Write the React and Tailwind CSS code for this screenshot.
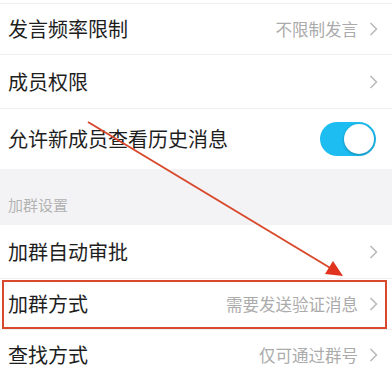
import React from "react";

const font = { fontFamily: '"Noto Sans CJK SC", "Noto Sans", sans-serif' };

function Chevron() {
  return (
    <svg width="9" height="14" viewBox="0 0 9 14" className="ml-[11px] shrink-0">
      <path d="M1.5 1 L7.5 7 L1.5 13" fill="none" stroke="#b8b8b8" strokeWidth="1.5" />
    </svg>
  );
}

function Row({ label, value, h, chevron = true }) {
  return (
    <div className={`flex items-center justify-between pl-[8px] pr-[14px] border-b border-[#eeeeee] bg-white ${h}`}>
      <span className="text-[20px] text-[#1e1e1e] leading-none">{label}</span>
      <div className="flex items-center">
        {value && <span className="text-[16.5px] text-[#ababab] leading-none">{value}</span>}
        {chevron && <Chevron />}
      </div>
    </div>
  );
}

export default function App() {
  return (
    <div className="relative w-[392px] h-[374px] overflow-hidden bg-white" style={font}>
      <div className="h-[4px] border-b border-[#eeeeee]" />
      <Row label="发言频率限制" value="不限制发言" h="h-[51px]" />
      <Row label="成员权限" h="h-[54px]" />
      <div className="flex items-center justify-between pl-[8px] pr-[16px] h-[60px] bg-white">
        <span className="text-[20px] text-[#1e1e1e] leading-none">允许新成员查看历史消息</span>
        <div className="w-[56px] h-[34px] rounded-full bg-[#1dbdf1] flex items-center justify-end pr-[2px]">
          <div className="w-[30px] h-[30px] rounded-full bg-white shadow-[0_1px_3px_rgba(0,0,0,0.3)]" />
        </div>
      </div>
      <div className="h-[56px] bg-[#f3f3f6] flex items-end pl-[8px] pb-[13px]">
        <span className="text-[15px] text-[#b3b3b3] leading-none">加群设置</span>
      </div>
      <Row label="加群自动审批" h="h-[54px]" />
      <Row label="加群方式" value="需要发送验证消息" h="h-[51px]" />
      <Row label="查找方式" value="仅可通过群号" h="h-[51px]" />

      <div className="absolute left-[2px] top-[280px] w-[385px] h-[49px] border-2 border-[#d8492d]" />
      <svg className="absolute left-0 top-0" width="392" height="374" viewBox="0 0 392 374">
        <line x1="88" y1="122" x2="332" y2="269" stroke="#d8492d" strokeWidth="2" />
        <polygon points="343,276 325,274 333,261" fill="#e0341f" />
      </svg>
    </div>
  );
}
